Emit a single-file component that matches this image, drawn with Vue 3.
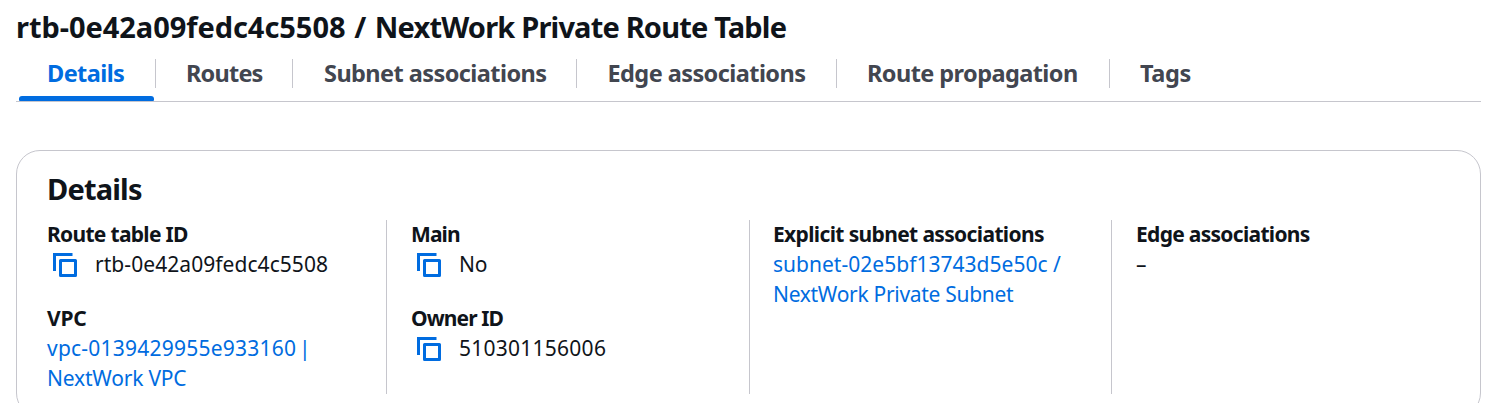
<script setup>
const tabs = [
  { label: 'Details', key: 'details', active: true },
  { label: 'Routes', key: 'routes' },
  { label: 'Subnet associations', key: 'subnets' },
  { label: 'Edge associations', key: 'edges' },
  { label: 'Route propagation', key: 'propagation' },
  { label: 'Tags', key: 'tags' },
]

const columns = [
  [
    { label: 'Route table ID', key: 'rtb', copy: true, lines: ['rtb-0e42a09fedc4c5508'] },
    { label: 'VPC', key: 'vpc', link: true, lines: ['vpc-0139429955e933160 |', 'NextWork VPC'] },
  ],
  [
    { label: 'Main', key: 'main', copy: true, lines: ['No'] },
    { label: 'Owner ID', key: 'owner', copy: true, lines: ['510301156006'] },
  ],
  [
    {
      label: 'Explicit subnet associations',
      key: 'subnet',
      link: true,
      lines: ['subnet-02e5bf13743d5e50c /', 'NextWork Private Subnet'],
    },
  ],
  [{ label: 'Edge associations', key: 'edge', lines: ['–'] }],
]
</script>

<template>
  <main class="page">
    <h1 class="title"><span class="title-id">rtb-0e42a09fedc4c5508 / </span><span>NextWork Private Route Table</span></h1>
    <nav class="tabs">
      <a v-for="t in tabs" :key="t.key" class="tab" :class="['tab-' + t.key, { active: t.active }]">
        <span>{{ t.label }}</span>
      </a>
    </nav>
    <section class="card">
      <h2 class="heading"><span>Details</span></h2>
      <div class="columns">
        <div v-for="(col, i) in columns" :key="i" class="column">
          <div v-for="f in col" :key="f.key" class="field" :class="'field-' + f.key">
            <div class="label"><span>{{ f.label }}</span></div>
            <div class="value" :class="{ link: f.link }">
              <svg v-if="f.copy" class="copy" width="24" height="24" viewBox="0 0 24 24" fill="none">
                <path d="M1.5 18V1.5H19.5" stroke="currentColor" stroke-width="3" />
                <rect x="7.5" y="7.5" width="15" height="15" stroke="currentColor" stroke-width="3" stroke-linejoin="round" />
              </svg>
              <div class="lines">
                <div v-for="(l, j) in f.lines" :key="j" :class="'line-' + j"><span>{{ l }}</span></div>
              </div>
            </div>
          </div>
        </div>
      </div>
    </section>
  </main>
</template>

<style>
body {
  background: #fff;
  overflow: hidden;
}
</style>

<style scoped>
.page {
  box-sizing: border-box;
  height: 403px;
  overflow: hidden;
  padding: 7px 5px 0 16px;
  font-family: 'Noto Sans', 'Open Sans', sans-serif;
  color: #0f141a;
  white-space: nowrap;
}
.title,
.heading {
  margin: 0;
  font-size: 29px;
  line-height: 40px;
  font-weight: 700;
  letter-spacing: -0.82px;
}
.title-id {
  letter-spacing: -0.05px;
  word-spacing: 1.2px;
}
.tabs {
  display: flex;
  height: 54px;
  border-bottom: 1px solid #c6c6cd;
}
.tab {
  position: relative;
  box-sizing: border-box;
  height: 54px;
  padding: 10px 0 0 31px;
  font-size: 23.5px;
  line-height: 32px;
  font-weight: 700;
  color: #424650;
  letter-spacing: -0.57px;
}
.tab:not(:last-child)::after {
  content: '';
  position: absolute;
  right: 0;
  top: 12px;
  width: 1px;
  height: 29px;
  background: #c6c6cd;
}
.tab-details { width: 140px; }
.tab-routes { width: 137px; padding-left: 30px; letter-spacing: -0.8px; }
.tab-subnets { width: 284px; }
.tab-edges { width: 260px; padding-left: 30.5px; }
.tab-propagation { width: 273px; padding-left: 30px; }
.tab-tags { padding-left: 30px; letter-spacing: -0.4px; }
.tab.active {
  color: #006ce0;
}
.tab.active::before {
  content: '';
  position: absolute;
  left: 3px;
  right: 2px;
  bottom: 0;
  height: 5px;
  border-radius: 3px 3px 1px 1px;
  background: #006ce0;
}
.card {
  box-sizing: border-box;
  height: 267px;
  margin-top: 48px;
  padding: 18px 0 0 30px;
  border: 1px solid #c6c6cd;
  border-radius: 24px;
}
.columns {
  display: flex;
  height: 174px;
  margin-top: 11px;
}
.column {
  box-sizing: border-box;
  width: 363px;
  padding-left: 24px;
  border-left: 1px solid #c6c6cd;
}
.column:first-child {
  width: 339px;
  padding-left: 0;
  border-left: 0;
}
.column:nth-child(3) {
  width: 362px;
  padding-left: 23px;
}
.field {
  margin-top: -1px;
}
.field + .field {
  margin-top: 24px;
}
.label,
.value {
  font-size: 21px;
  line-height: 30px;
}
.label {
  font-weight: 700;
  letter-spacing: -0.7px;
}
.field-main .label,
.field-owner .label {
  letter-spacing: -0.9px;
}
.field-subnet .label {
  letter-spacing: -0.64px;
}
.field-vpc .label {
  letter-spacing: -0.2px;
}
.value {
  display: flex;
  letter-spacing: -0.3px;
}
.field-rtb .line-0 { letter-spacing: 0.06px; }
.field-vpc .line-0 { letter-spacing: 0.23px; word-spacing: -3px; }
.field-vpc .line-1 { letter-spacing: -0.2px; }
.field-owner .line-0 { letter-spacing: 0.25px; }
.field-subnet .line-0 { letter-spacing: 0.02px; }
.link {
  color: #006ce0;
}
.copy {
  flex: none;
  margin: 4px 18px 0 6px;
  color: #006ce0;
}
</style>
